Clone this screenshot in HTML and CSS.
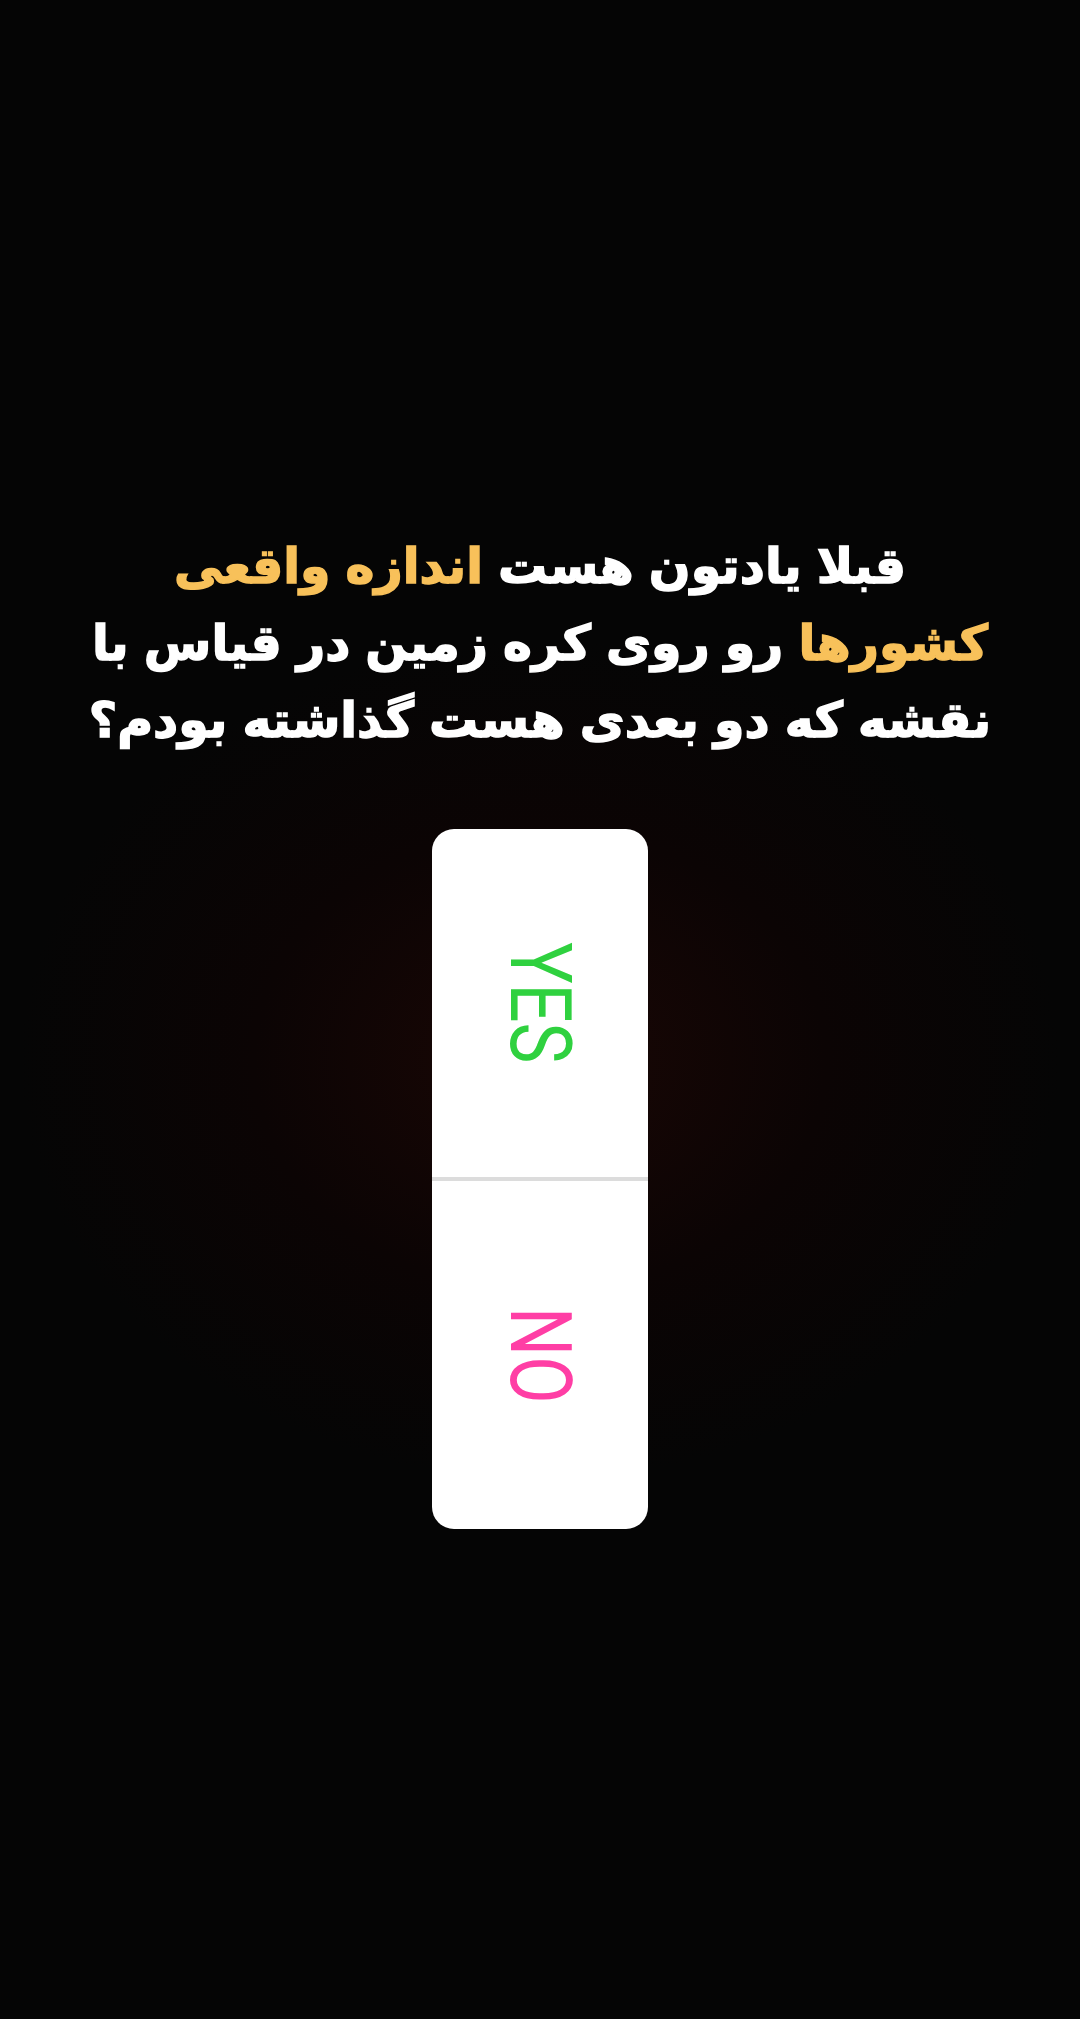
FILE: index.html
```html
<!DOCTYPE html>
<html lang="fa">
<head>
<meta charset="utf-8">
<link rel="stylesheet" href="styles.css">
</head>
<body>
<main class="story">
  <p class="question" dir="rtl">قبلا یادتون هست <span class="hl">اندازه واقعی</span><br><span class="hl">کشورها</span> رو روی کره زمین در قیاس با<br>نقشه که دو بعدی هست گذاشته بودم؟</p>
  <div class="poll">
    <div class="option"><span class="label yes">YES</span></div>
    <div class="divider"></div>
    <div class="option"><span class="label no">NO</span></div>
  </div>
</main>
</body>
</html>
```
FILE: styles.css
```css
html, body {
  margin: 0;
  padding: 0;
}
body {
  width: 1080px;
  height: 2019px;
  overflow: hidden;
  background: radial-gradient(ellipse 520px 420px at 540px 1060px, #1a0705 0%, #0b0404 55%, #050505 100%);
  background-color: #050505;
}
.story {
  display: flex;
  flex-direction: column;
  align-items: center;
  padding-top: 528px;
}
.question {
  margin: 0;
  font-family: "DejaVu Sans", sans-serif;
  font-weight: bold;
  font-size: 49px;
  line-height: 77px;
  color: #ffffff;
  text-align: center;
  -webkit-text-stroke: 1.5px currentColor;
  word-spacing: -2px;
}
.hl {
  color: #f8c15a;
}
.poll {
  margin-top: 70px;
  width: 216px;
  height: 700px;
  background: #ffffff;
  border-radius: 22px;
  display: flex;
  flex-direction: column;
  overflow: hidden;
}
.option {
  flex: 1;
  display: flex;
  align-items: center;
  justify-content: center;
}
.divider {
  height: 4px;
  background: #dcdcdc;
}
.label {
  writing-mode: vertical-rl;
  font-family: Roboto, sans-serif;
  font-weight: 400;
  font-size: 86px;
  line-height: 1;
  transform: scaleY(0.8);
}
.yes { color: #2fd13f; }
.no { color: #ff3ea5; }
```
